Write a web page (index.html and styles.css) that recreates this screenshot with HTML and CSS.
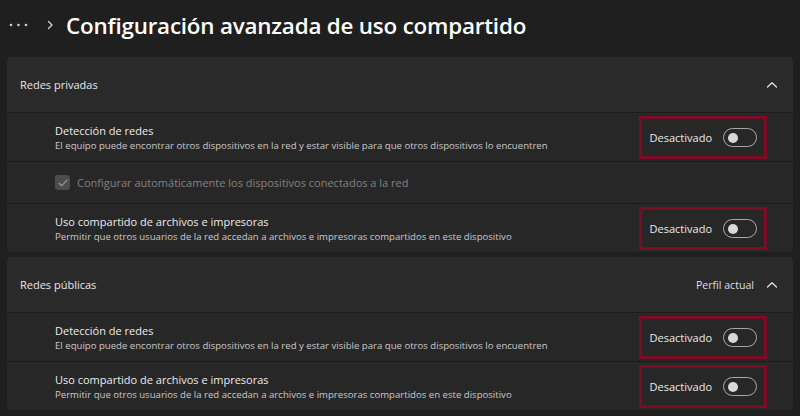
FILE: index.html
```html
<!DOCTYPE html>
<html lang="es">
<head>
    <meta charset="UTF-8">
    <meta name="viewport" content="width=device-width, initial-scale=1.0">
    <title>Configuración avanzada de uso compartido</title>
    <link rel="stylesheet" href="styles.css">
</head>
<body>
    <header class="page-head">
        <svg class="crumb-more" width="20" height="4" viewBox="0 0 20 4"><circle cx="2" cy="2" r="1.3" fill="#cfcfcf"/><circle cx="9.5" cy="2" r="1.3" fill="#cfcfcf"/><circle cx="17" cy="2" r="1.3" fill="#cfcfcf"/></svg>
        <svg class="crumb-sep" width="8" height="10" viewBox="0 0 8 10"><path d="M2.5 1.5 L6 5 L2.5 8.5" fill="none" stroke="#d8d8d8" stroke-width="1.2" stroke-linecap="round" stroke-linejoin="round"/></svg>
        <h1>Configuración avanzada de uso compartido</h1>
    </header>

    <section class="group">
        <div class="group-head">
            <span>Redes privadas</span>
            <span class="group-meta">
                <svg class="chevron" width="12" height="8" viewBox="0 0 12 8"><path d="M1.5 6 L6 1.8 L10.5 6" fill="none" stroke="#e6e6e6" stroke-width="1.2" stroke-linecap="round" stroke-linejoin="round"/></svg>
            </span>
        </div>
        <div class="row">
            <div class="row-text">
                <div class="row-title">Detección de redes</div>
                <div class="row-desc">El equipo puede encontrar otros dispositivos en la red y estar visible para que otros dispositivos lo encuentren</div>
            </div>
            <div class="state">
                <span>Desactivado</span>
                <span class="toggle"></span>
            </div>
        </div>
        <div class="row row-check">
            <span class="check">
                <svg width="10" height="8" viewBox="0 0 10 8"><path d="M1 4.2 L3.7 6.8 L9 1.2" fill="none" stroke="#9a9898" stroke-width="1.2" stroke-linecap="round" stroke-linejoin="round"/></svg>
            </span>
            <span class="check-label">Configurar automáticamente los dispositivos conectados a la red</span>
        </div>
        <div class="row">
            <div class="row-text">
                <div class="row-title">Uso compartido de archivos e impresoras</div>
                <div class="row-desc">Permitir que otros usuarios de la red accedan a archivos e impresoras compartidos en este dispositivo</div>
            </div>
            <div class="state">
                <span>Desactivado</span>
                <span class="toggle"></span>
            </div>
        </div>
    </section>

    <section class="group">
        <div class="group-head">
            <span>Redes públicas</span>
            <span class="group-meta">
                Perfil actual
                <svg class="chevron" width="12" height="8" viewBox="0 0 12 8"><path d="M1.5 6 L6 1.8 L10.5 6" fill="none" stroke="#e6e6e6" stroke-width="1.2" stroke-linecap="round" stroke-linejoin="round"/></svg>
            </span>
        </div>
        <div class="row">
            <div class="row-text">
                <div class="row-title">Detección de redes</div>
                <div class="row-desc">El equipo puede encontrar otros dispositivos en la red y estar visible para que otros dispositivos lo encuentren</div>
            </div>
            <div class="state">
                <span>Desactivado</span>
                <span class="toggle"></span>
            </div>
        </div>
        <div class="row">
            <div class="row-text">
                <div class="row-title">Uso compartido de archivos e impresoras</div>
                <div class="row-desc">Permitir que otros usuarios de la red accedan a archivos e impresoras compartidos en este dispositivo</div>
            </div>
            <div class="state">
                <span>Desactivado</span>
                <span class="toggle"></span>
            </div>
        </div>
    </section>
</body>
</html>
```

FILE: styles.css
```css
body {
    margin: 0;
    background: #1f1f1f;
    color: #e8e6e6;
    font-family: 'Open Sans', 'Noto Sans', sans-serif;
    overflow: hidden;
}
.page-head {
    height: 50px;
    display: flex;
    align-items: center;
    padding: 0 9px;
    margin-bottom: 7px;
}
.crumb-more {
    margin-right: 17px;
}
.crumb-sep {
    margin-right: 12px;
}
.page-head h1 {
    margin: 0;
    font-size: 22.4px;
    font-weight: 600;
    color: #ffffff;
    letter-spacing: -0.2px;
}
.group {
    margin: 0 7px 5px;
    display: flex;
    flex-direction: column;
    gap: 1px;
    border-radius: 4px;
    overflow: hidden;
    background: #1c1b1b;
}
.group-head {
    height: 55px;
    background: #2b2a2a;
    display: flex;
    align-items: center;
    justify-content: space-between;
    padding: 0 15px 0 13px;
    font-size: 11px;
}
.group-meta {
    display: flex;
    align-items: center;
    gap: 12px;
    font-size: 10.6px;
    color: #dedede;
}
.row {
    height: 48px;
    background: #282727;
    display: flex;
    align-items: center;
    justify-content: space-between;
    padding: 0 26px 0 48px;
}
.row-title {
    font-size: 11px;
    line-height: 16px;
    color: #ececec;
}
.row-desc {
    font-size: 9.6px;
    line-height: 13px;
    color: #c9c7c7;
}
.state {
    display: flex;
    align-items: center;
    gap: 11px;
    height: 37px;
    padding: 0 7px 0 8px;
    border: 3px solid #7e0b24;
    font-size: 11px;
    color: #eaeaea;
}
.toggle {
    width: 32px;
    height: 17px;
    border: 1px solid #a9a9a9;
    border-radius: 10px;
    position: relative;
}
.toggle::after {
    content: '';
    position: absolute;
    left: 4px;
    top: 4px;
    width: 10px;
    height: 10px;
    border-radius: 50%;
    background: #d9d9d9;
}
.row-check {
    height: 41px;
    justify-content: flex-start;
    gap: 7px;
}
.check {
    width: 15px;
    height: 15px;
    border-radius: 3px;
    background: #4e4c4c;
    display: flex;
    align-items: center;
    justify-content: center;
}
.check-label {
    font-size: 11px;
    color: #838181;
}
```
